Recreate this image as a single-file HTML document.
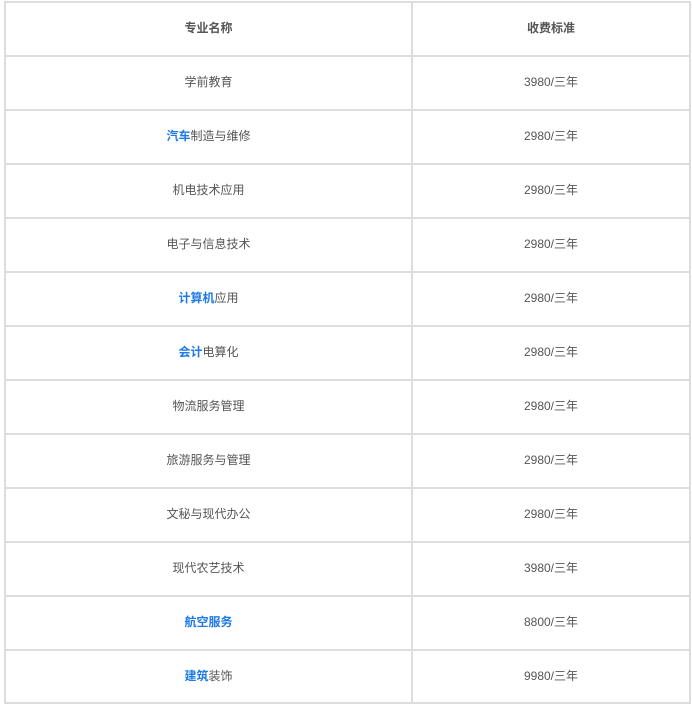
<!DOCTYPE html>
<html><head><meta charset="utf-8"><style>
body{margin:0;width:692px;height:705px;background:#fff;position:relative;overflow:hidden;font-family:"Liberation Sans","Noto Sans CJK SC",sans-serif;font-size:12px;color:#555}
.h{position:absolute;left:4px;width:687px;height:2px;background:#ddd}
.v{position:absolute;top:1px;height:704px;width:2px;background:#ddd}
.c{position:absolute;height:54px;line-height:54px;text-align:center}
.a{left:6px;width:405px}.b{left:413px;width:276px}
b{font-weight:bold}.l{color:#1e7ae8;font-weight:bold}
</style></head><body>
<div class="v" style="left:4px;height:703px"></div><div class="v" style="left:411px;height:703px"></div><div class="v" style="left:689px;height:703px"></div>
<div class="h" style="top:1px"></div><div class="h" style="top:55px"></div><div class="h" style="top:109px"></div><div class="h" style="top:163px"></div><div class="h" style="top:217px"></div><div class="h" style="top:271px"></div><div class="h" style="top:325px"></div><div class="h" style="top:379px"></div><div class="h" style="top:433px"></div><div class="h" style="top:487px"></div><div class="h" style="top:541px"></div><div class="h" style="top:595px"></div><div class="h" style="top:649px"></div><div class="h" style="top:702px"></div>
<div class="c a" style="top:1px"><b>专业名称</b></div><div class="c b" style="top:1px"><b>收费标准</b></div>
<div class="c a" style="top:55px">学前教育</div><div class="c b" style="top:55px">3980/三年</div>
<div class="c a" style="top:109px"><span class="l">汽车</span>制造与维修</div><div class="c b" style="top:109px">2980/三年</div>
<div class="c a" style="top:163px">机电技术应用</div><div class="c b" style="top:163px">2980/三年</div>
<div class="c a" style="top:217px">电子与信息技术</div><div class="c b" style="top:217px">2980/三年</div>
<div class="c a" style="top:271px"><span class="l">计算机</span>应用</div><div class="c b" style="top:271px">2980/三年</div>
<div class="c a" style="top:325px"><span class="l">会计</span>电算化</div><div class="c b" style="top:325px">2980/三年</div>
<div class="c a" style="top:379px">物流服务管理</div><div class="c b" style="top:379px">2980/三年</div>
<div class="c a" style="top:433px">旅游服务与管理</div><div class="c b" style="top:433px">2980/三年</div>
<div class="c a" style="top:487px">文秘与现代办公</div><div class="c b" style="top:487px">2980/三年</div>
<div class="c a" style="top:541px">现代农艺技术</div><div class="c b" style="top:541px">3980/三年</div>
<div class="c a" style="top:595px"><span class="l">航空服务</span></div><div class="c b" style="top:595px">8800/三年</div>
<div class="c a" style="top:649px"><span class="l">建筑</span>装饰</div><div class="c b" style="top:649px">9980/三年</div>
</body></html>
